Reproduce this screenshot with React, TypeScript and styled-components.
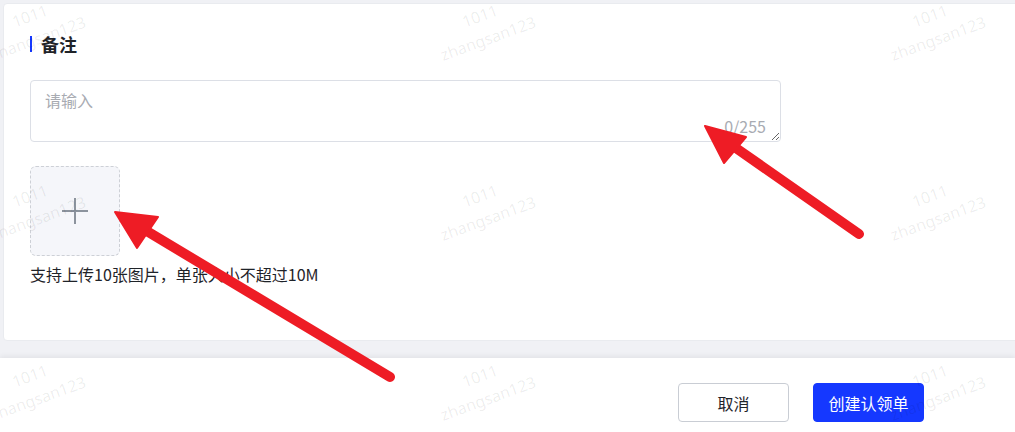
import React from 'react'
import styled, { createGlobalStyle } from 'styled-components'

const GlobalStyle = createGlobalStyle`
  html, body {
    margin: 0;
    padding: 0;
    background: #f0f1f5;
  }
  body {
    font-family: "Noto Sans CJK SC", "Noto Sans", sans-serif;
    color: #1f2329;
  }
`

const Page = styled.div`
  position: relative;
  height: 432px;
  overflow: hidden;
  padding: 3px 0 0 3px;
  box-sizing: border-box;
  background: #f0f1f5;
`

const Card = styled.div`
  margin-right: -10px;
  margin-bottom: 17px;
  padding: 28px 27px 54px 26px;
  background: #fff;
  border: 1px solid #e9ebef;
  border-radius: 4px;
`

const SectionTitle = styled.div`
  display: flex;
  align-items: center;
  gap: 9px;
  height: 24px;
  font-size: 18px;
  font-weight: 700;
  color: #1f2329;

  &::before {
    content: '';
    width: 2px;
    height: 16px;
    background: #1538ff;
  }
`

const TextareaWrap = styled.div`
  position: relative;
  width: 751px;
  margin-top: 24px;
`

const Textarea = styled.textarea`
  display: block;
  width: 100%;
  height: 62px;
  box-sizing: border-box;
  padding: 8px 14px;
  border: 1px solid #dcdfe6;
  border-radius: 4px;
  font-family: inherit;
  font-size: 16px;
  line-height: 22px;
  color: #1f2329;
  resize: vertical;
  outline: none;

  &::placeholder {
    color: #a8abb2;
  }
`

const Counter = styled.span`
  position: absolute;
  right: 15px;
  bottom: 7px;
  font-size: 16px;
  line-height: 18px;
  color: #a8abb2;
`

const Upload = styled.div`
  display: flex;
  align-items: center;
  justify-content: center;
  width: 90px;
  height: 90px;
  margin-top: 24px;
  box-sizing: border-box;
  border: 1px dashed #cdd0d6;
  border-radius: 6px;
  background: #f5f6fa;
  color: #8c939d;
`

const Hint = styled.div`
  margin-top: 6px;
  font-size: 16px;
  line-height: 24px;
  color: #1f2329;
`

const Footer = styled.div`
  display: flex;
  justify-content: flex-end;
  gap: 24px;
  height: 100px;
  padding: 25px 91px 0 0;
  margin-left: -3px;
  background: #fff;
  box-shadow: 0 -2px 5px rgba(0, 0, 0, 0.06);
`

const Button = styled.button<{ $primary?: boolean }>`
  width: 111px;
  height: 39px;
  border-radius: 4px;
  font-family: inherit;
  font-size: 16px;
  cursor: pointer;
  border: 1px solid ${(p) => (p.$primary ? '#1538ff' : '#c9cdd4')};
  background: ${(p) => (p.$primary ? '#1538ff' : '#fff')};
  color: ${(p) => (p.$primary ? '#fff' : '#1f2329')};
`

const WatermarkLayer = styled.div`
  position: absolute;
  top: -63px;
  left: -191px;
  display: grid;
  grid-template-columns: repeat(4, 450px);
  grid-auto-rows: 180px;
  pointer-events: none;
`

const Mark = styled.div`
  display: flex;
  flex-direction: column;
  align-items: center;
  justify-content: center;
  transform: rotate(-20deg);
  font-family: "Noto Sans", sans-serif;
  font-size: 16px;
  line-height: 24px;
  color: rgba(0, 0, 0, 0.075);
`

const Arrows = styled.svg`
  position: absolute;
  inset: 0;
  pointer-events: none;
`

const PlusIcon = () => (
  <svg width="26" height="26" viewBox="0 0 26 26">
    <path d="M13 0v26M0 13h26" stroke="currentColor" strokeWidth="2" />
  </svg>
)

const App: React.FC = () => (
  <Page>
    <GlobalStyle />
    <Card>
      <SectionTitle>备注</SectionTitle>
      <TextareaWrap>
        <Textarea placeholder="请输入" maxLength={255} />
        <Counter>0/255</Counter>
      </TextareaWrap>
      <Upload>
        <PlusIcon />
      </Upload>
      <Hint>支持上传10张图片，单张大小不超过10M</Hint>
    </Card>
    <Footer>
      <Button>取消</Button>
      <Button $primary>创建认领单</Button>
    </Footer>

    <WatermarkLayer>
      {Array.from({ length: 12 }).map((_, i) => (
        <Mark key={i}>
          <span>1011</span>
          <span>zhangsan123</span>
        </Mark>
      ))}
    </WatermarkLayer>

    <Arrows width="1015" height="432" viewBox="0 0 1015 432">
      <g fill="#ee1c25" stroke="#ee1c25" strokeLinecap="round" strokeLinejoin="round">
        <line x1="390" y1="377" x2="145" y2="230" strokeWidth="10" />
        <polygon points="115,212 158,217 137,248" strokeWidth="2" />
        <line x1="859" y1="234" x2="733" y2="146" strokeWidth="10" />
        <polygon points="705,126 746,137 724,163" strokeWidth="2" />
      </g>
    </Arrows>
  </Page>
)

export default App
